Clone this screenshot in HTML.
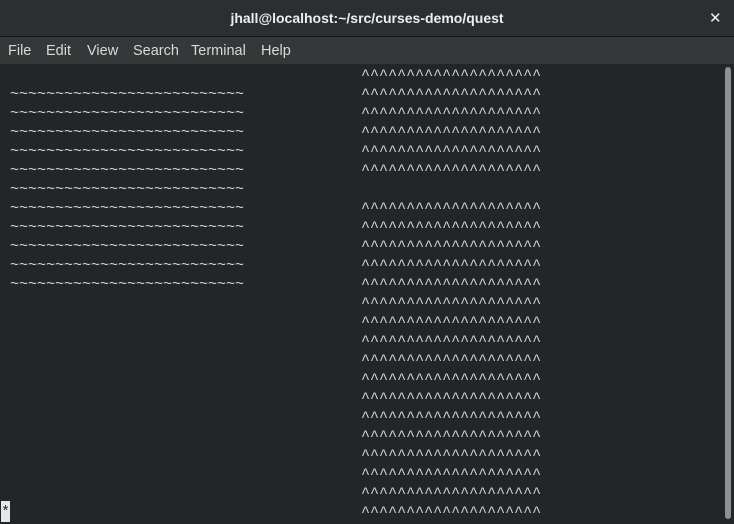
<!DOCTYPE html>
<html><head><meta charset="utf-8">
<style>
html,body{margin:0;padding:0;width:734px;height:522px;overflow:hidden;background:#232629;}
#title{position:absolute;left:0;top:0;width:734px;height:36px;background:#2c2f32;border-bottom:1px solid #141617;}
#title .t{position:absolute;left:0;width:734px;top:10px;text-align:center;color:#eeeeec;font:bold 14px "Liberation Sans",sans-serif;}
#title .x{position:absolute;left:709px;top:9px;color:#eeeeec;font:bold 15px "DejaVu Sans",sans-serif;}
#menu{position:absolute;left:0;top:37px;width:734px;height:27px;background:#353839;}
#menu span{position:absolute;top:6px;color:#d8dad8;font:14.5px "Liberation Sans",sans-serif;}
#term{position:absolute;left:1px;top:66px;font:15px/19px "Liberation Mono",monospace;color:#d3d7cf;white-space:pre;}
#cur{position:absolute;left:1px;top:501px;width:9px;height:21px;background:#e6e8e6;color:#232629;font:15px/23px "Liberation Mono",monospace;text-align:center;}
#sb{position:absolute;left:725px;top:67px;width:6px;height:452px;background:#8e9193;border-radius:3px;}
</style></head><body>
<div id="title"><div class="t">jhall@localhost:~/src/curses-demo/quest</div><div class="x">✕</div></div>
<div id="menu"><span style="left:8px">File</span><span style="left:46px">Edit</span><span style="left:87px">View</span><span style="left:133px">Search</span><span style="left:191px">Terminal</span><span style="left:261px">Help</span></div>
<div id="term">                                        ^^^^^^^^^^^^^^^^^^^^
 ~~~~~~~~~~~~~~~~~~~~~~~~~~             ^^^^^^^^^^^^^^^^^^^^
 ~~~~~~~~~~~~~~~~~~~~~~~~~~             ^^^^^^^^^^^^^^^^^^^^
 ~~~~~~~~~~~~~~~~~~~~~~~~~~             ^^^^^^^^^^^^^^^^^^^^
 ~~~~~~~~~~~~~~~~~~~~~~~~~~             ^^^^^^^^^^^^^^^^^^^^
 ~~~~~~~~~~~~~~~~~~~~~~~~~~             ^^^^^^^^^^^^^^^^^^^^
 ~~~~~~~~~~~~~~~~~~~~~~~~~~
 ~~~~~~~~~~~~~~~~~~~~~~~~~~             ^^^^^^^^^^^^^^^^^^^^
 ~~~~~~~~~~~~~~~~~~~~~~~~~~             ^^^^^^^^^^^^^^^^^^^^
 ~~~~~~~~~~~~~~~~~~~~~~~~~~             ^^^^^^^^^^^^^^^^^^^^
 ~~~~~~~~~~~~~~~~~~~~~~~~~~             ^^^^^^^^^^^^^^^^^^^^
 ~~~~~~~~~~~~~~~~~~~~~~~~~~             ^^^^^^^^^^^^^^^^^^^^
                                        ^^^^^^^^^^^^^^^^^^^^
                                        ^^^^^^^^^^^^^^^^^^^^
                                        ^^^^^^^^^^^^^^^^^^^^
                                        ^^^^^^^^^^^^^^^^^^^^
                                        ^^^^^^^^^^^^^^^^^^^^
                                        ^^^^^^^^^^^^^^^^^^^^
                                        ^^^^^^^^^^^^^^^^^^^^
                                        ^^^^^^^^^^^^^^^^^^^^
                                        ^^^^^^^^^^^^^^^^^^^^
                                        ^^^^^^^^^^^^^^^^^^^^
                                        ^^^^^^^^^^^^^^^^^^^^
                                        ^^^^^^^^^^^^^^^^^^^^</div>
<div id="cur">*</div>
<div id="sb"></div>
</body></html>
